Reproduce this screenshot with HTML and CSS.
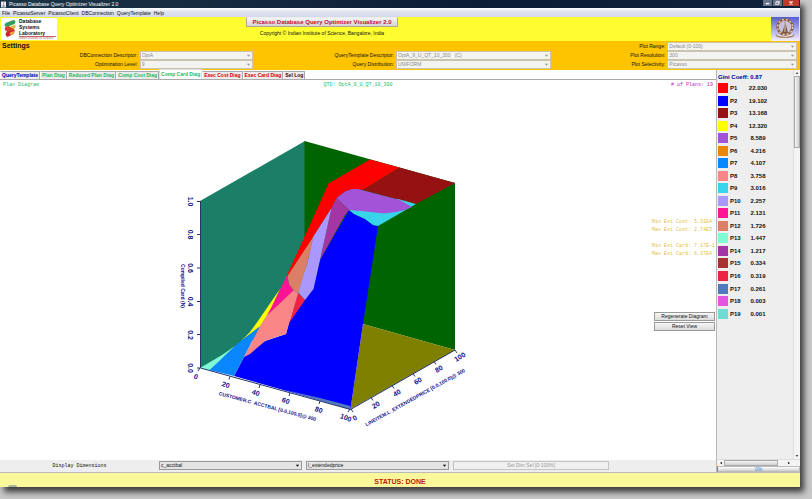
FILE: index.html
```
<!DOCTYPE html>
<html lang="en">
<head>
  <meta charset="UTF-8" />
  <meta name="viewport" content="width=device-width, initial-scale=1.0" />
  <title>Picasso Database Query Optimizer Visualizer 2.0</title>
  <link rel="stylesheet" href="styles.css">
</head>
<body>

<div class="window">

  <header class="titlebar">
    <svg class="app-icon" viewBox="0 0 6 7"><rect width="6" height="7" fill="#e8eef4"/><path d="M3 1c-1 1 1 1.500 0 3" stroke="#d22" fill="none" stroke-width=".7"/><path d="M1 5h4M2 6h2" stroke="#357" stroke-width=".6"/></svg>
    <span>Picasso Database Query Optimizer Visualizer 2.0</span>
    <div class="win-buttons">
      <button type="button" aria-label="Minimize"><svg viewBox="0 0 10 6"><path d="M3 4h4" stroke="#fff" stroke-width="1.500"/></svg></button>
      <button type="button" aria-label="Maximize"><svg viewBox="0 0 10 6"><path d="M3 2.500h3v2.500h-3zM4 2.500v-1h3v2.500h-1" stroke="#fff" stroke-width=".8" fill="none"/></svg></button>
      <button type="button" class="close" aria-label="Close"><svg viewBox="0 0 16 6"><path d="M6.500 1.500l3 3M9.500 1.500l-3 3" stroke="#fff" stroke-width="1.200"/></svg></button>
    </div>
  </header>

  <nav class="menubar">
    <button type="button">File</button>
    <button type="button">PicassoServer</button>
    <button type="button">PicassoClient</button>
    <button type="button">DBConnection</button>
    <button type="button">QueryTemplate</button>
    <button type="button">Help</button>
  </nav>

  <section class="banner">
    <div class="logo">
      <svg viewBox="0 0 17 20">
        <path d="M4 5l8-3q2 0 2 2l-1 2-8 3q-2 0-2-2z" fill="#2fa055"/>
        <path d="M5 10l8-3q2 0 1 2l-1 2-7 3q-2-1-2-3z" fill="#d6c43a"/>
        <path d="M4 9l3-1 5 3-6 3q-2-1-3-3z" fill="#d8402c"/>
        <path d="M5 14l7-3q2 1 1 3l-1 2-6 3q-2-1-2-3z" fill="#c8242a"/>
        <path d="M8 15l4-2 1 2-4 2z" fill="#e8b23a"/>
      </svg>
      <div class="logo-text">Database<br>Systems<br>Laboratory<small>Indian Institute of Science</small></div>
    </div>
    <div class="banner-text">
      <button type="button" class="product">Picasso Database Query Optimizer Visualizer 2.0</button>
      <p>Copyright © Indian Institute of Science, Bangalore, India</p>
    </div>
    <svg class="emblem" viewBox="0 0 28 24">
      <defs><linearGradient id="sky" x2="0" y2="1"><stop offset="0" stop-color="#5560cc"/><stop offset=".7" stop-color="#c4c4ee"/><stop offset="1" stop-color="#f4f0f6"/></linearGradient></defs>
      <rect width="28" height="24" fill="url(#sky)"/>
      <circle cx="14" cy="10" r="7.500" fill="#c9c2dc" stroke="#8a5a3c" stroke-width="2.400"/>
      <circle cx="14" cy="10" r="7.500" fill="none" stroke="#efd9b8" stroke-width="1.200" stroke-dasharray="2 2"/>
      <path d="M14 4l1.500 6 1.500 6h-6l2-6z" fill="#77563f"/>
      <path d="M14 6v9" stroke="#f0e4d0" stroke-width=".8"/>
      <path d="M4 17q10 4 20 0l-2 3q-8 2-16 0z" fill="#a88468"/>
      <path d="M6 18q8 3 16 0" stroke="#fff" stroke-width=".7" fill="none"/>
    </svg>
  </section>

  <form class="settings">
    <h2>Settings</h2>
    <label class="c5 r1" for="range">Plot Range:</label>
    <select class="c6 r1" id="range" disabled><option>Default (0-100)</option></select>

    <label class="c1 r2" for="dbconn">DBConnection Descriptor:</label>
    <select class="c2 r2" id="dbconn" disabled><option>OptA</option></select>
    <label class="c3 r2" for="qtd">QueryTemplate Descriptor:</label>
    <select class="c4 r2" id="qtd" disabled><option>OptA_9_U_QT_10_300&nbsp;&nbsp;&nbsp;(C)</option></select>
    <label class="c5 r2" for="resolution">Plot Resolution:</label>
    <select class="c6 r2" id="resolution" disabled><option>300</option></select>

    <label class="c1 r3" for="level">Optimization Level:</label>
    <select class="c2 r3" id="level" disabled><option>9</option></select>
    <label class="c3 r3" for="dist">Query Distribution:</label>
    <select class="c4 r3" id="dist" disabled><option>UNIFORM</option></select>
    <label class="c5 r3" for="selectivity">Plot Selectivity:</label>
    <select class="c6 r3" id="selectivity" disabled><option>Picasso</option></select>
  </form>

  <div class="workspace">
    <main class="main">
      <div class="tabs" role="tablist">
        <button type="button" role="tab" class="navy">QueryTemplate</button>
        <button type="button" role="tab" class="green">Plan Diag</button>
        <button type="button" role="tab" class="green">Reduced Plan Diag</button>
        <button type="button" role="tab" class="green">Comp Cost Diag</button>
        <button type="button" role="tab" class="green active" aria-selected="true">Comp Card Diag</button>
        <button type="button" role="tab" class="red">Exec Cost Diag</button>
        <button type="button" role="tab" class="red">Exec Card Diag</button>
        <button type="button" role="tab" class="maroon">Sel Log</button>
      </div>

      <div class="plot-head">
        <span>Plan Diagram</span>
        <span>QTD: OptA_9_U_QT_10_300</span>
        <span class="plans"># of Plans: 19</span>
      </div>

      <div class="plot">
        <svg class="chart" viewBox="0 90 652 370" role="img" aria-label="Compiled cardinality diagram">
          <!-- walls and floor -->
          <path fill="#1b7f67" d="M200 201L305 141V300L240 350L200 368z"/>
          <path fill="#006400" d="M304.500 141L455 183V350L363 324L304.500 300z"/>
          <path fill="#808000" d="M363 324L455 350L350.500 409z"/>
          <!-- surface, one shape per plan -->
          <path fill="#0000ff" d="M349 210L354 214L365 219L373 225L378 226L363 324L350.500 409L234 376L244 357L265 341L286 334L289 322L305 299L313 289L320 260z"/>
          <path fill="#5079c0" d="M285 390L320 398L350.500 406V409.500z"/>
          <path fill="#ff0000" d="M328.500 183.500L370 159.500L399.500 167.500L363 190L358 189L352 189L345 191.500L336.500 198L331.500 208L313 237L288 277L287 275L304.500 237z"/>
          <path fill="#961212" d="M399.500 167.500L455 183L416 204L363 190z"/>
          <path fill="#38d5ea" d="M398 199L416 204L378 226L373 225L365 219L354 214L349 210z"/>
          <path fill="#a353d8" d="M336.500 198L345 191.500L352 189L358 189L400 200L412 207L405 210L396 212L384 213.500L366 211.500L349 210z"/>
          <path fill="#a335a5" d="M336.500 198L349 210L345 215L320 260L331.500 208z"/>
          <path fill="#aa98ff" d="M331.500 208L320 260L313.500 289L305 300L298 292L308 260L313 237z"/>
          <path fill="#db7f67" d="M313.500 236.500L308 260L298 293.500L294 291L289 284L287.500 276z"/>
          <path fill="#ff1493" d="M287 275L289 284L293.500 291L266.500 316.500L270 308L280 290z"/>
          <path fill="#ee2244" d="M298 293L305 300L289 323z"/>
          <path fill="#f98686" d="M293.500 290.500L298 293.500L289.500 322L286 334L276 337L265 341L250 354L244 357L259.500 327L266.500 316z"/>
          <path fill="#ffff00" d="M280 289L271 308L266.500 316L259.500 327L240 342L250 332L259 319.500L271 302z"/>
          <path fill="#0a86ff" d="M235 346L240 341.500L259.500 326.500L244 357L234 376L209 370z"/>
          <path fill="#7ffad2" d="M200 368L222 355L235 346L209 370.500z"/>
          <!-- axes -->
          <path class="axis" d="M200.500 201V368L350.500 409.500L455 350M197 201.500h3M197 234.500h3M197 268h3M197 301.500h3M197 334.500h3M197 368h3M200 368l-2 3M230 376.500l-1 3M260 385l-1 3M290 393l-1 3M320 401l-1 3M350 409l-2 3M351 409l2 3M371 397.500l2 3M392 385.500l2 3M413 373.500l2 3M434 361.500l2 3M455 350l2 3"/>
          <g class="tick">
            <text transform="translate(188 201.500) rotate(90)">1.0</text>
            <text transform="translate(188 234.500) rotate(90)">0.8</text>
            <text transform="translate(188 268) rotate(90)">0.6</text>
            <text transform="translate(188 301.500) rotate(90)">0.4</text>
            <text transform="translate(188 335) rotate(90)">0.2</text>
            <text transform="translate(188 368) rotate(90)">0.0</text>
            <text transform="translate(195 379) rotate(20)">0</text>
            <text transform="translate(225 387) rotate(20)">20</text>
            <text transform="translate(255 395) rotate(20)">40</text>
            <text transform="translate(285 403) rotate(20)">60</text>
            <text transform="translate(318 412) rotate(20)">80</text>
            <text transform="translate(345 420) rotate(20)">100</text>
            <text transform="translate(356 420) rotate(-30)">0</text>
            <text transform="translate(377 407) rotate(-30)">20</text>
            <text transform="translate(398 395) rotate(-30)">40</text>
            <text transform="translate(419 383) rotate(-30)">60</text>
            <text transform="translate(440 371) rotate(-30)">80</text>
            <text transform="translate(461 359) rotate(-30)">100</text>
          </g>
          <g class="tick axis-title">
            <text transform="translate(181 286) rotate(90)">Compiled Card (N)</text>
            <text transform="translate(267 408) rotate(15)">CUSTOMER.C_ACCTBAL [0.0,100.0]@ 300</text>
            <text transform="translate(416 399) rotate(-29)">LINEITEM.L_EXTENDEDPRICE [0.0,100.0]@ 300</text>
          </g>
        </svg>

        <aside class="plot-side">
          <p>Min Est Cost: 5.31E4<br>Max Est Cost: 2.74E5</p>
          <p>Min Est Card: 7.17E-1<br>Max Est Card: 6.37E4</p>
          <div class="plot-buttons">
            <button type="button" class="btn">Regenerate Diagram</button>
            <button type="button" class="btn">Reset View</button>
          </div>
        </aside>
      </div>

      <form class="dimensions">
        <label for="dim-x">Display Dimensions</label>
        <select id="dim-x"><option>c_acctbal</option></select>
        <select id="dim-y" aria-label="Second dimension"><option>l_extendedprice</option></select>
        <button type="button" class="btn" disabled>Set Dim Sel [0-100%]</button>
      </form>
    </main>

    <aside class="legend">
      <div class="legend-body">
        <div class="legend-list">
          <h3>Gini Coeff: 0.87</h3>
          <table>
            <tr><td><i class="p1"></i></td><th>P1</th><td>22.030</td></tr>
            <tr><td><i class="p2"></i></td><th>P2</th><td>19.102</td></tr>
            <tr><td><i class="p3"></i></td><th>P3</th><td>13.168</td></tr>
            <tr><td><i class="p4"></i></td><th>P4</th><td>12.320</td></tr>
            <tr><td><i class="p5"></i></td><th>P5</th><td>8.589</td></tr>
            <tr><td><i class="p6"></i></td><th>P6</th><td>4.216</td></tr>
            <tr><td><i class="p7"></i></td><th>P7</th><td>4.107</td></tr>
            <tr><td><i class="p8"></i></td><th>P8</th><td>3.758</td></tr>
            <tr><td><i class="p9"></i></td><th>P9</th><td>3.016</td></tr>
            <tr><td><i class="p10"></i></td><th>P10</th><td>2.257</td></tr>
            <tr><td><i class="p11"></i></td><th>P11</th><td>2.131</td></tr>
            <tr><td><i class="p12"></i></td><th>P12</th><td>1.726</td></tr>
            <tr><td><i class="p13"></i></td><th>P13</th><td>1.447</td></tr>
            <tr><td><i class="p14"></i></td><th>P14</th><td>1.217</td></tr>
            <tr><td><i class="p15"></i></td><th>P15</th><td>0.334</td></tr>
            <tr><td><i class="p16"></i></td><th>P16</th><td>0.319</td></tr>
            <tr><td><i class="p17"></i></td><th>P17</th><td>0.261</td></tr>
            <tr><td><i class="p18"></i></td><th>P18</th><td>0.003</td></tr>
            <tr><td><i class="p19"></i></td><th>P19</th><td>0.001</td></tr>
          </table>
        </div>
        <div class="vscroll">
          <svg viewBox="0 0 7 7"><path d="M2 4.500h3L3.500 2.500z"/></svg>
          <div class="thumb"></div>
          <svg viewBox="0 0 7 7"><path d="M2 2.500h3L3.500 4.500z"/></svg>
        </div>
      </div>
      <div class="hscroll">
        <svg viewBox="0 0 7 7"><path d="M4.500 2v3L2.500 3.500z"/></svg>
        <div class="thumb"></div>
        <svg viewBox="0 0 7 7"><path d="M2.500 2v3L4.500 3.500z"/></svg>
      </div>
      <div class="progress" role="progressbar" aria-valuenow="0">0%</div>
    </aside>
  </div>

  <footer class="status">STATUS: DONE</footer>
</div>

</body>
</html>
```
FILE: styles.css
```
*,
*::before,
*::after {
  box-sizing: border-box;
  margin: 0;
  padding: 0;
}

body {
  height: 100vh;
  padding: 0 12px 12px 0;
  overflow: hidden;
  background: #c8c8c8;
  font-family: "Liberation Sans", Arial, sans-serif;
  font-size: 5px;
  line-height: 8px;
  color: #111;
}

button,
select {
  font: inherit;
  color: inherit;
  border: none;
  background: none;
}

svg {
  display: block;
}

.window {
  display: flex;
  flex-direction: column;
  height: 100%;
  background: #eee;
  box-shadow: 4px 5px 6px rgba(0, 0, 0, 0.7);
}

/* title + menu */
.titlebar {
  display: flex;
  align-items: center;
  gap: 3px;
  height: 8px;
  padding-left: 1px;
  background: linear-gradient(90deg, #1c3545, #14293f 30%, #0b1c36 60%, #10233c);
  color: #fff;
}

.app-icon {
  width: 5px;
  height: 7px;
}

.win-buttons {
  display: flex;
  align-self: flex-start;
  margin-left: auto;
}

.win-buttons button {
  width: 10px;
  height: 6px;
  background: #66758a;
  border-right: 1px solid #1b2a3c;
}

.win-buttons .close {
  width: 17px;
  background: #c0392b;
}

.menubar {
  display: flex;
  gap: 3px;
  height: 9px;
  padding-left: 2px;
  background: linear-gradient(#fff, #dfe4f0 40%, #d3d9ea);
}

/* yellow banner */
.banner {
  display: flex;
  justify-content: space-between;
  height: 24px;
  background: #fdfd2f;
}

.logo {
  display: flex;
  width: 56px;
  height: 22px;
  margin: 1px 0 0 1px;
  background: #fff;
}

.logo svg {
  width: 18px;
  height: 20px;
}

.logo-text {
  font-size: 5px;
  font-weight: bold;
  line-height: 6px;
}

.logo-text small {
  display: block;
  width: 37px;
  border-top: 1px solid #c66;
  font-size: 3px;
  line-height: 3px;
  font-weight: normal;
  white-space: nowrap;
  color: #b55;
}

.banner-text {
  flex: 1;
  padding-right: 23%;
  text-align: center;
}

.banner-text p {
  margin-top: 2px;
}

.product {
  height: 10px;
  padding: 0 6px;
  border: 1px solid #b0a890;
  border-top-color: #eee;
  background: linear-gradient(#f4f4f4, #d4d4d4);
  font-size: 6px;
  font-weight: bold;
  line-height: 8px;
  color: #c8102a;
}

.emblem {
  width: 28px;
  height: 24px;
  margin-right: 1px;
}

/* settings */
.settings {
  display: grid;
  grid-template-columns: 138fr 114fr 139fr 155fr 113fr 130fr;
  grid-template-rows: 9px 9px 9px;
  column-gap: 2px;
  height: 29px;
  padding: 1px 3px 1px 0;
  background: #ffc400;
}

.settings h2 {
  grid-area: 1 / 1;
  padding-left: 2px;
  font-size: 7px;
  line-height: 8px;
}

.settings label {
  text-align: right;
  line-height: 9px;
}

.c1 { grid-column: 1; }
.c2 { grid-column: 2; }
.c3 { grid-column: 3; }
.c4 { grid-column: 4; }
.c5 { grid-column: 5; }
.c6 { grid-column: 6; }
.r1 { grid-row: 1; }
.r2 { grid-row: 2; }
.r3 { grid-row: 3; }

select {
  appearance: none;
  min-width: 0;
  height: 9px;
  padding-left: 1px;
  border: 1px solid #999;
  line-height: 7px;
  background: #e4e4e4 url("data:image/svg+xml,%3Csvg xmlns='http://www.w3.org/2000/svg' viewBox='0 0 6 6'%3E%3Cpath d='M1 2h4L3 4.500z'/%3E%3C/svg%3E") no-repeat right 1px center / 5px 5px;
}

select:disabled {
  border-color: #c9c3b0;
  background-color: #f3f3f0;
  background-image: url("data:image/svg+xml,%3Csvg xmlns='http://www.w3.org/2000/svg' viewBox='0 0 6 6'%3E%3Cpath d='M1 2h4L3 4.500z' fill='%23999'/%3E%3C/svg%3E");
  color: #8c8c8c;
  opacity: 1;
}

/* workspace */
.workspace {
  flex: 1;
  display: flex;
  min-height: 0;
  border-bottom: 1px solid #bbb;
}

.main {
  flex: 1;
  display: flex;
  flex-direction: column;
  min-width: 0;
  background: #fff;
}

.tabs {
  display: flex;
  align-items: flex-end;
  height: 10px;
  border-bottom: 1px solid #aaa;
}

.tabs button {
  height: 8px;
  padding: 0 1px;
  border: 1px solid #aaa;
  border-bottom: none;
  border-left-color: #fff;
  background: #ececec;
  font-weight: bold;
  line-height: 7px;
  white-space: nowrap;
}

.tabs .active {
  height: 10px;
  border-color: #ddd;
  background: #fff;
}

.navy { color: #0000b4; }
.green { color: #1fb85c; }
.red { color: #d40000; }
.maroon { color: #400010; }

.plot-head {
  display: grid;
  grid-template-columns: 1fr 1fr 1fr;
  height: 10px;
  padding: 1px 3px 0;
  font-family: "Liberation Mono", monospace;
  color: #1fb85c;
}

.plot-head span:nth-child(2) {
  text-align: center;
}

.plot-head .plans {
  text-align: right;
  color: #c321c3;
}

.plot {
  flex: 1;
  display: flex;
  min-height: 0;
}

.chart {
  flex: 1;
  min-width: 0;
  height: 100%;
}

.axis {
  fill: none;
  stroke: #26346e;
  stroke-width: 1;
}

.tick {
  font-size: 7px;
  font-weight: bold;
  fill: #10108c;
  text-anchor: middle;
}

.axis-title {
  font-size: 5px;
}

.plot-side {
  width: 64px;
  padding: 128px 1px 0 0;
  font-family: "Liberation Mono", monospace;
  color: #dfc044;
  white-space: nowrap;
}

.plot-side p {
  margin-bottom: 8px;
}

.plot-buttons {
  display: grid;
  gap: 1px;
  margin-top: 54px;
  padding-left: 2px;
}

.btn {
  height: 9px;
  border: 1px solid #999;
  background: linear-gradient(#f6f6f6, #dcdcdc);
  font-family: "Liberation Sans", Arial, sans-serif;
  line-height: 7px;
  color: #111;
}

.btn:disabled {
  border-color: #c4c4c4;
  background: #f0f0f0;
  color: #999;
}

.dimensions {
  display: grid;
  grid-template-columns: 155fr 143fr 143fr 156fr 103fr;
  gap: 4px;
  height: 12px;
  padding-top: 1px;
  background: #eee;
}

.dimensions label {
  padding-left: 4px;
  text-align: center;
  font-family: "Liberation Mono", monospace;
  line-height: 10px;
}

/* legend */
.legend {
  display: flex;
  flex-direction: column;
  width: 84px;
  border-left: 1px solid #b8b8b8;
  background: #eee;
}

.legend-body {
  flex: 1;
  display: flex;
  min-height: 0;
}

.legend-list {
  flex: 1;
}

.legend h3 {
  padding: 3px 0 0 1px;
  font-size: 6px;
  line-height: 9px;
  color: #0000a0;
}

.legend table {
  height: 238px;
  border-collapse: collapse;
  font-size: 6px;
  font-weight: bold;
}

.legend td:first-child {
  padding: 0 2px 0 1px;
}

.legend th {
  width: 17px;
  text-align: left;
}

.legend td:last-child {
  width: 22px;
  text-align: center;
}

.legend i {
  display: block;
  width: 10px;
  height: 10px;
}

.p1 { background: #ff0000; }
.p2 { background: #0000ff; }
.p3 { background: #961212; }
.p4 { background: #ffff00; }
.p5 { background: #a353d8; }
.p6 { background: #ea860a; }
.p7 { background: #0a86ff; }
.p8 { background: #f98686; }
.p9 { background: #38d5ea; }
.p10 { background: #aa98ff; }
.p11 { background: #ff1493; }
.p12 { background: #db7f67; }
.p13 { background: #7ffad2; }
.p14 { background: #a335a5; }
.p15 { background: #a83232; }
.p16 { background: #ee2244; }
.p17 { background: #5079c0; }
.p18 { background: #e356e0; }
.p19 { background: #6fdbd3; }

.vscroll,
.hscroll {
  display: flex;
  background: #f4f4f4;
}

.vscroll {
  flex-direction: column;
  justify-content: space-between;
  width: 7px;
  border-left: 1px solid #ddd;
}

.vscroll .thumb {
  height: 72px;
  margin-bottom: auto;
  border: 1px solid #aaa;
  background: linear-gradient(90deg, #f4f4f4, #cfcfcf);
}

.hscroll {
  justify-content: space-between;
  height: 7px;
  padding: 0 8px 0 1px;
  border-top: 1px solid #ddd;
}

.hscroll .thumb {
  width: 54px;
  margin-right: auto;
  border: 1px solid #aaa;
  background: linear-gradient(#f4f4f4, #cfcfcf);
}

.vscroll svg,
.hscroll svg {
  width: 6px;
  height: 6px;
}

.progress {
  height: 6px;
  border: 1px solid #bbb;
  border-left: 1px solid #3b8ee0;
  background: linear-gradient(#fff, #ccc);
  text-align: center;
  line-height: 4px;
  color: #2f86d8;
}

.status {
  position: relative;
  height: 14px;
  background: #faf89a;
  font-size: 7px;
  font-weight: bold;
  line-height: 18px;
  text-align: center;
  color: #c01800;
}

/* top of the start orb showing over the status bar */
.status::after {
  content: "";
  position: absolute;
  left: 8px;
  bottom: 0;
  width: 9px;
  height: 2px;
  border-radius: 5px 5px 0 0;
  background: #a9b59a;
}
```
